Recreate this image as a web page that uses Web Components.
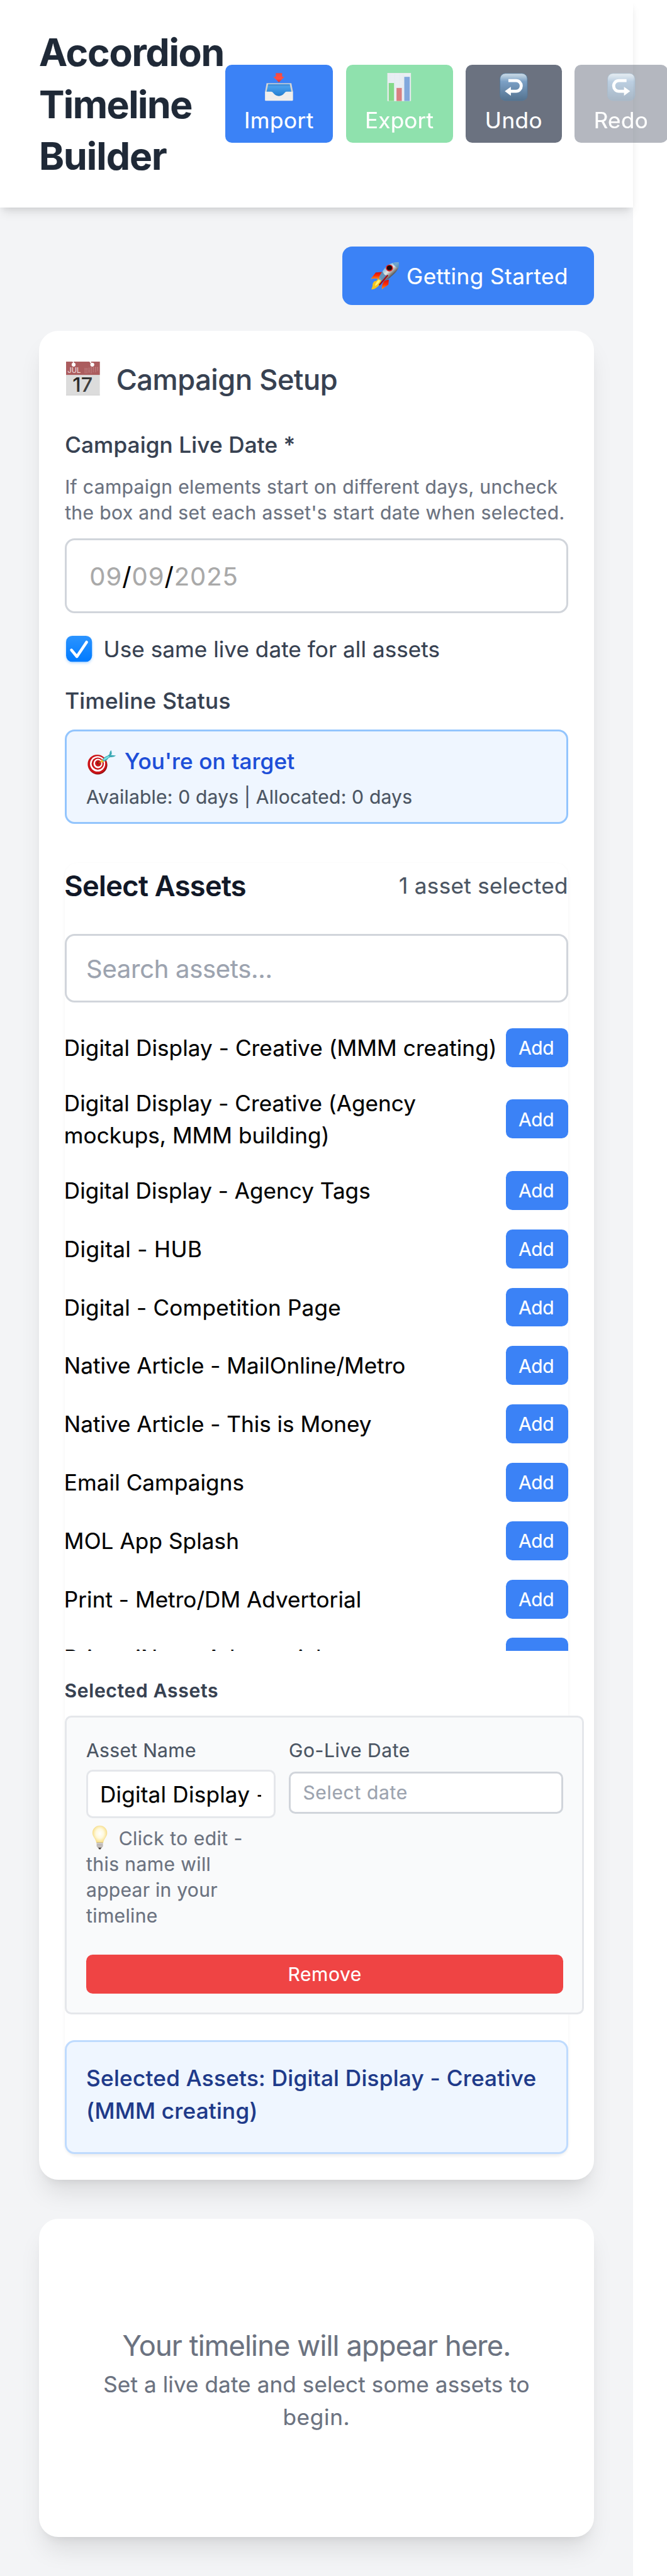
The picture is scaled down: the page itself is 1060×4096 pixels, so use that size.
<!DOCTYPE html>
<html lang="en">
<head>
<meta charset="utf-8">
<title>Accordion Timeline Builder</title>
<style>
html{background:#fff}
body{margin:0;width:1060px;height:4096px;overflow:hidden;font-family:Inter,"Liberation Sans",sans-serif;color:#000}
</style>
</head>
<body>
<timeline-app></timeline-app>
<script>
// One layout unit ("u") is one CSS pixel of the 411-unit wide mobile layout.
const U = 1060 / 411;
const css = s => s.replace(/(-?\d*\.?\d+)u\b/g, (m, n) => (n * U).toFixed(3) + 'px');

function define(name, styles, html, after) {
  customElements.define(name, class extends HTMLElement {
    connectedCallback() {
      if (this.shadowRoot) return;
      const root = this.attachShadow({ mode: 'open' });
      root.innerHTML = '<style>*{box-sizing:border-box}' + css(styles) + '</style>' +
        (typeof html === 'function' ? html(this) : html);
      if (after) after(this, root);
    }
  });
}

/* Single line of text, tracked so its ink spans "w" units. */
const ctx = document.createElement('canvas').getContext('2d');
define('text-run', ':host{display:block;white-space:pre;transform:translate(var(--dx,0px),.3u);-webkit-text-stroke:.08u currentColor}', '<slot></slot>', el => {
  const w = parseFloat(el.getAttribute('w'));
  if (!w) return;
  const cs = getComputedStyle(el), t = el.textContent;
  ctx.font = cs.fontWeight + ' ' + cs.fontSize + ' ' + cs.fontFamily;
  const m = ctx.measureText(t);
  const ink = m.actualBoundingBoxRight + m.actualBoundingBoxLeft;
  el.style.letterSpacing = ((w * U - ink) / (t.length - 1)).toFixed(3) + 'px';
});

/* Pictograms */
const keycap = flip => `<svg viewBox="0 0 157 156"><defs><linearGradient id="k" x1="0" y1="0" x2="0" y2="1"><stop offset="0" stop-color="#cfdde8"/><stop offset=".1" stop-color="#b5cbdd"/><stop offset=".3" stop-color="#7ba0c5"/><stop offset="1" stop-color="#54728f"/></linearGradient></defs><rect x="2" y="2" width="153" height="152" rx="30" fill="url(#k)" stroke="#55799a" stroke-width="3"/><g ${flip ? 'transform="translate(157 0) scale(-1 1)"' : ''}><path d="M49 42H92a29 30 0 0 1 0 60H60" fill="none" stroke="#fff" stroke-width="17"/><path d="M29 102 63 77V127z" fill="#fff"/></g></svg>`;
const art = {
  inbox: `<svg viewBox="0 0 155 154"><defs><linearGradient id="r" x1="0" y1="0" x2="0" y2="1"><stop offset="0" stop-color="#f4483f"/><stop offset=".6" stop-color="#ff5047"/><stop offset="1" stop-color="#d92d2a"/></linearGradient><linearGradient id="b" x1="0" y1="0" x2="0" y2="1"><stop offset="0" stop-color="#55a8f2"/><stop offset=".8" stop-color="#2a86d8"/><stop offset="1" stop-color="#1f74bd"/></linearGradient></defs><path d="M60 0H95V20H108L77 52 46 20H60z" fill="url(#r)"/><path d="M9 56H146L155 103V151H1V103z" fill="#d6d5d3"/><path d="M18 61H137L146 103 130 130H25L9 103z" fill="url(#b)"/><path d="M18 61H137L139 72H16z" fill="#2b6fb2" opacity=".35"/><path d="M1 103H34C48 103 50 127 77 127S107 103 120 103H154V150Q154 153 151 153H4Q1 153 1 150z" fill="#efeeec"/></svg>`,
  chart: `<svg viewBox="0 0 134 159"><rect width="134" height="159" fill="#d3d5d8"/><rect x="4" y="4" width="126" height="155" fill="#d6e0ea"/><path d="M4 14H130M4 24H130M4 34H130M4 44H130M4 54H130M4 64H130M4 74H130M4 84H130M14 4V159M42 4V159M90 4V159M70 4V159" stroke="#c2d1de" stroke-width="1.5"/><path d="M8 57H38V159H8z" fill="#0ab514"/><path d="M52 85H82V159H52z" fill="#b40305"/><path d="M96 22H127V159H96z" fill="#0554bd"/></svg>`,
  undo: keycap(false),
  redo: keycap(true),
  rocket: `<svg viewBox="0 0 157 151"><defs><linearGradient id="m" x1=".2" y1=".1" x2=".75" y2=".65"><stop offset="0" stop-color="#3b7fb8"/><stop offset=".35" stop-color="#9cc4dd"/><stop offset=".6" stop-color="#e6e6e4"/><stop offset="1" stop-color="#4c4a4a"/></linearGradient><linearGradient id="f" x1="0" y1="0" x2="0" y2="1"><stop offset="0" stop-color="#d5100e"/><stop offset=".5" stop-color="#ff2d05"/><stop offset="1" stop-color="#ff9a1e"/></linearGradient></defs><path d="M64 54 28 57 0 93Q20 86 46 94z" fill="url(#f)"/><path d="M76 102 101 96 98 125 62 150Q60 125 76 102z" fill="url(#f)"/><path d="M40 92Q34 104 22 105 8 118 11 130L4 151Q22 150 30 142 52 130 60 98z" fill="#f5c51c"/><path d="M44 98Q26 112 24 132 44 122 54 100z" fill="#fff176"/><path d="M156 2C120-3 88 14 66 50L47 82Q52 97 78 102 102 92 112 80C140 58 162 34 156 2z" fill="url(#m)"/><path d="M66 50 47 82Q54 96 78 102L90 76Q72 70 66 50z" fill="#3f78ae" opacity=".75"/><path d="M156 2C140-2 122 4 122 6 130 20 142 30 155 34 158 20 157 8 156 2z" fill="#4c91c6" opacity=".75"/><path d="M93 74 50 124" stroke="#a90d14" stroke-width="8" stroke-linecap="round"/><ellipse cx="104" cy="32" rx="20" ry="19" fill="#de1a1c"/><ellipse cx="104" cy="31" rx="14" ry="13" fill="#1b0b0d"/></svg>`,
  calendar: `<svg viewBox="0 0 188 188"><rect width="188" height="188" fill="#dcdcdc"/><rect width="188" height="74" fill="#ab5c5e"/><path d="M0 186.500H188" stroke="#cfcfcf" stroke-width="3"/><path d="M36 0H42L45 8H40zM130 0H138L142 9H136z" fill="#fff"/><circle cx="42" cy="17" r="11" fill="#fff"/><circle cx="146" cy="17" r="11" fill="#fff"/><path d="M106 37V64M116 37V64M128 34V64M140 31V64M152 31V60M164 31V58M176 31V54" stroke="#c98f91" stroke-width="6" stroke-dasharray="3 3"/><text x="8" y="64" font-size="42" textLength="74" lengthAdjust="spacingAndGlyphs" fill="#ecd5d5">JUL</text><defs><linearGradient id="d" x1="0" y1="0" x2="1" y2="1"><stop offset="0" stop-color="#161616"/><stop offset="1" stop-color="#555"/></linearGradient></defs><text x="36" y="168" font-size="110" font-weight="500" textLength="112" lengthAdjust="spacingAndGlyphs" fill="url(#d)">17</text></svg>`,
  dart: `<svg viewBox="0 0 158 134"><ellipse cx="57" cy="81" rx="53" ry="53" fill="#8d0f12"/><ellipse cx="54" cy="77" rx="53" ry="53" fill="#cc1418"/><ellipse cx="56" cy="75" rx="42" ry="43" fill="#fff"/><ellipse cx="57" cy="74" rx="34" ry="34" fill="#c9171b"/><ellipse cx="58" cy="73" rx="25" ry="26" fill="#fff"/><ellipse cx="59" cy="72" rx="17" ry="18" fill="#c9171b"/><ellipse cx="60" cy="71" rx="7" ry="7" fill="#8d1013"/><path d="M60 72 90 52" stroke="#b58a12" stroke-width="4"/><path d="M77 50 92 62 82 68 74 66z" fill="#f0bd23"/><path d="M82 54Q90 38 112 30L122 22Q122 6 132 0L135 18 130 26 158 30Q146 40 126 38L116 44Q106 60 90 62z" fill="#3aa9b4"/><path d="M86 52Q98 38 116 31L122 36Q108 48 92 56z" fill="#7fe0e4"/></svg>`,
  bulb: `<svg viewBox="0 0 90 146"><defs><radialGradient id="y" cx=".5" cy=".45" r=".55"><stop offset="0" stop-color="#fff"/><stop offset=".5" stop-color="#fff9dd"/><stop offset="1" stop-color="#f8dd7e"/></radialGradient></defs><path d="M45 1C18 1 1 20 1 45 1 68 22 80 25 106H65C68 80 89 68 89 45 89 20 72 1 45 1z" fill="url(#y)" stroke="#f0d27b" stroke-width="2"/><path d="M26 104H64V126L56 138H34L26 126z" fill="#a8a29f"/><path d="M26 110H64M26 119H64M29 128H61" stroke="#e4dfdc" stroke-width="4"/><path d="M36 136H54L50 145H40z" fill="#4a4341"/></svg>`,
  check: `<svg viewBox="0 0 144 144" style="filter:drop-shadow(0 2px 2px rgba(0,122,255,.3))"><defs><linearGradient id="c" x1="0" y1="0" x2="0" y2="1"><stop offset="0" stop-color="#2b94ff"/><stop offset="1" stop-color="#007aff"/></linearGradient></defs><rect width="144" height="144" rx="34" fill="url(#c)"/><path d="M30 79 60 115 114 35" fill="none" stroke="#fff" stroke-width="16" stroke-linecap="round" stroke-linejoin="round"/></svg>`
};
define('picto-icon', ':host{display:block;flex:none;line-height:0}svg{display:block;width:100%;height:100%;overflow:visible}',
  el => art[el.getAttribute('name')]);

define('tool-button', `
:host{display:flex;flex-direction:column;align-items:center;flex:none;height:48u;padding:4u 0;border-radius:4u;color:#fff;background:var(--bg);font-size:13.6u;line-height:20u}
.i{height:20u;display:flex;align-items:center}
picto-icon{width:var(--iw,17.3u);height:17.3u;margin-bottom:.4u}`,
  el => `<div class="i"><picto-icon name="${el.getAttribute('icon')}"></picto-icon></div><slot></slot>`);

define('app-header', `
:host{display:flex;align-items:center;width:390u;height:128u;padding:16u 24u;box-sizing:border-box;background:#fff;box-shadow:0 4u 6u -1u rgba(0,0,0,.1),0 2u 4u -2u rgba(0,0,0,.1);position:relative}
h1{margin:0;width:114.67u;flex:none;font-size:23.5u;line-height:32u;font-weight:700;color:#1f2937}
.tools{display:flex;gap:8u;flex:none}
.im{--bg:#3b82f6;width:66.4u}.ex{--bg:#22c55e;--iw:15u;width:66u;opacity:.5}.un{--bg:#6b7280;width:59u}.re{--bg:#6b7280;width:57.2u;opacity:.5}`, `
<h1><text-run w="112.700">Accordion</text-run><text-run w="93.200">Timeline</text-run><text-run w="77.600">Builder</text-run></h1>
<div class="tools">
<tool-button class="im" icon="inbox"><text-run w="41.4">Import</text-run></tool-button>
<tool-button class="ex" icon="chart"><text-run w="40.9">Export</text-run></tool-button>
<tool-button class="un" icon="undo"><text-run w="33.6">Undo</text-run></tool-button>
<tool-button class="re" icon="redo"><text-run w="31.8">Redo</text-run></tool-button>
</div>`);

define('panel-card', `
:host{display:block;box-sizing:border-box;background:#fff;border-radius:12u;padding:16u;box-shadow:0 10u 15u -3u rgba(0,0,0,.1),0 4u 6u -4u rgba(0,0,0,.1)}`, '<slot></slot>');

define('text-field', `
:host{display:flex;align-items:center;box-sizing:border-box;background:#fff;border:3px solid #d1d5db;border-radius:6u;overflow:hidden}`, '<slot></slot>');

define('asset-row', `
:host{display:flex;align-items:center;justify-content:space-between;font-size:13.6u;line-height:20u;flex:none;--dx:-.5u}
button{all:unset;--dx:0px;box-sizing:border-box;width:38.3u;height:24u;border-radius:4u;background:#3b82f6;color:#fff;font-size:11.65u;line-height:16u;padding:4u 0 4u 7.8u}`,
  '<div><slot></slot></div><button><text-run w="21.4">Add</text-run></button>');

const assets = [
  [['Digital Display - Creative (MMM creating)', 264.4]],
  [['Digital Display - Creative (Agency', 215.3], ['mockups, MMM building)', 161.6]],
  [['Digital Display - Agency Tags', 187]],
  [['Digital - HUB', 83]],
  [['Digital - Competition Page', 168.8]],
  [['Native Article - MailOnline/Metro', 208.8]],
  [['Native Article - This is Money', 188]],
  [['Email Campaigns', 109.2]],
  [['MOL App Splash', 106]],
  [['Print - Metro/DM Advertorial', 181]],
  [['Print - iNews Advertorial', 156.3]]
];

define('asset-picker', `
:host{display:block;border-radius:8u;box-shadow:0 1u 2u rgba(0,0,0,.05);height:796u}
.head{display:flex;justify-content:space-between;align-items:center;height:28u}
h2{margin:0;font-size:17.5u;line-height:28u;font-weight:600;color:#111827;--dx:-.3u}
.count{font-size:13.6u;line-height:20u;color:#4b5563}
.search{margin-top:16u;height:42u;padding-left:12u;font-size:15.5u;line-height:24u;color:#9ca3af}
.list{margin-top:16u;height:384u;overflow:hidden;display:flex;flex-direction:column;gap:12u}
h3{margin:16u 0 8u;font-size:11.65u;line-height:16u;font-weight:600;color:#374151;--dx:-.2u}
.sum{margin-top:16u;height:70u;box-sizing:border-box;border:3px solid #bfdbfe;background:#eff6ff;border-radius:6u;padding:12u;font-size:13.6u;line-height:20u;font-weight:500;color:#1e3a8a;box-shadow:0 1u 2u rgba(0,0,0,.03)}`, `
<div class="head"><h2><text-run w="110.700">Select Assets</text-run></h2><text-run class="count" w="102.7">1 asset selected</text-run></div>
<text-field class="search"><text-run w="113">Search assets...</text-run></text-field>
<div class="list">${assets.map(a => '<asset-row>' + a.map(l => `<text-run w="${l[1]}">${l[0]}</text-run>`).join('') + '</asset-row>').join('')}</div>
<h3><text-run w="94">Selected Assets</text-run></h3>
<selected-asset></selected-asset>
<div class="sum"><text-run w="276.200">Selected Assets: Digital Display - Creative</text-run><text-run w="103.2">(MMM creating)</text-run></div>`);

define('selected-asset', `
:host{display:block;box-sizing:border-box;width:320u;height:184u;border:3px solid #e5e7eb;border-radius:4u;background:#f9fafb;padding:12u;font-size:11.65u;line-height:16u}
.cols{display:grid;grid-template-columns:116.67u 169.1u;gap:8.2u;height:118u;align-items:start}
.lab{color:#4b5563}
.name{margin-top:4u;height:30u;border-color:#e5e7eb;border-radius:4u;padding:0 7.8u;font-size:13.6u;line-height:20u;--dx:-.5u}
.name div{overflow:hidden;width:100%}
.date{margin-top:5u;height:26u;border-radius:4u;padding-left:7.5u;color:#9ca3af}
.hint{margin-top:4u;color:#6b7280}
.first{display:flex;align-items:center;padding-left:4u}
picto-icon{width:9u;height:14.6u;margin-right:7u}
button{all:unset;box-sizing:border-box;display:flex;justify-content:center;margin-top:16u;width:294u;height:24u;padding:4u;border-radius:4u;background:#ef4444;color:#fff}`, `
<div class="cols">
<div><text-run class="lab" w="67.4">Asset Name</text-run>
<text-field class="name"><div><text-run w="100.600">Digital Display -</text-run></div></text-field>
<div class="hint"><div class="first"><picto-icon name="bulb"></picto-icon><text-run w="75.2">Click to edit -</text-run></div><text-run w="75.8">this name will</text-run><text-run w="80.3">appear in your</text-run><text-run w="43.700">timeline</text-run></div></div>
<div><text-run class="lab" w="73.9">Go-Live Date</text-run>
<text-field class="date"><text-run w="63.700">Select date</text-run></text-field></div>
</div>
<button><text-run w="44.300">Remove</text-run></button>`);

define('campaign-setup', `
:host{display:block;color:#374151;font-size:13.6u;line-height:20u}
.title{display:flex;align-items:center;height:28u;margin:0 0 16u;font-size:17.5u;line-height:28u;font-weight:500;padding-left:.9u}
.title picto-icon{width:20.8u;height:20.8u;margin:0 9.9u 1.6u 0}
.m{font-weight:500}
.help{margin:8u 0;font-size:11.65u;line-height:16u;color:#6b7280}
.date{height:46u;padding-left:14u;font-size:15.5u;line-height:24u;color:#a9a9a9}
.date b{font-weight:400;color:#000}
.chk{display:flex;align-items:center;height:20u;margin:12u 0;padding-left:.8u}
.chk picto-icon{width:16u;height:16u;margin-right:7u}
.stat{margin:8u 0 24u;height:58u;box-sizing:border-box;border:3px solid #93c5fd;border-radius:6u;background:#eff6ff;padding:8u 12u}
.t{display:flex;align-items:center;height:20u;color:#1d4ed8;font-weight:500;margin-bottom:4u;padding-left:.9u}
.t picto-icon{width:17.6u;height:14.9u;margin:2u 5.1u 0 0}
.a{font-size:11.65u;line-height:16u;color:#4b5563}`, `
<h2 class="title"><picto-icon name="calendar"></picto-icon><text-run w="135">Campaign Setup</text-run></h2>
<text-run class="m" w="141">Campaign Live Date *</text-run>
<div class="help"><text-run w="303">If campaign elements start on different days, uncheck</text-run><text-run w="307.200">the box and set each asset's start date when selected.</text-run></div>
<text-field class="date"><text-run w="89.700">09<b>/</b>09<b>/</b>2025</text-run></text-field>
<div class="chk"><picto-icon name="check"></picto-icon><text-run w="205.500">Use same live date for all assets</text-run></div>
<text-run class="m" w="101.300">Timeline Status</text-run>
<div class="stat"><div class="t"><picto-icon name="dart"></picto-icon><text-run w="104.800">You're on target</text-run></div><text-run class="a" w="200.500">Available: 0 days | Allocated: 0 days</text-run></div>`);

define('timeline-app', `
:host{display:block;width:411u;height:1588.200u}
main{width:390u;height:1460.200u;background:#f3f4f6;padding:24u;display:flex;flex-direction:column}
.start{all:unset;box-sizing:border-box;align-self:flex-end;flex:none;display:flex;align-items:center;width:155u;height:36u;padding:8u 17.2u;border-radius:6u;background:#3b82f6;color:#fff;font-size:13.6u;line-height:20u}
.start picto-icon{width:17.5u;height:16.8u;margin-right:4.8u}
.setup{margin:16u 0 24u;height:1140u;flex:none}
.empty{height:196u;flex:none;padding-top:64u;display:flex;flex-direction:column;align-items:center;color:#6b7280;font-size:13.6u;line-height:20u}
.big{font-size:17.5u;line-height:28u}`, `
<app-header></app-header>
<main>
<button class="start"><picto-icon name="rocket"></picto-icon><text-run w="97.700">Getting Started</text-run></button>
<panel-card class="setup"><campaign-setup></campaign-setup><asset-picker></asset-picker></panel-card>
<panel-card class="empty"><text-run class="big" w="238">Your timeline will appear here.</text-run><text-run w="261.800">Set a live date and select some assets to</text-run><text-run w="39.600">begin.</text-run></panel-card>
</main>`);
</script>
</body>
</html>
